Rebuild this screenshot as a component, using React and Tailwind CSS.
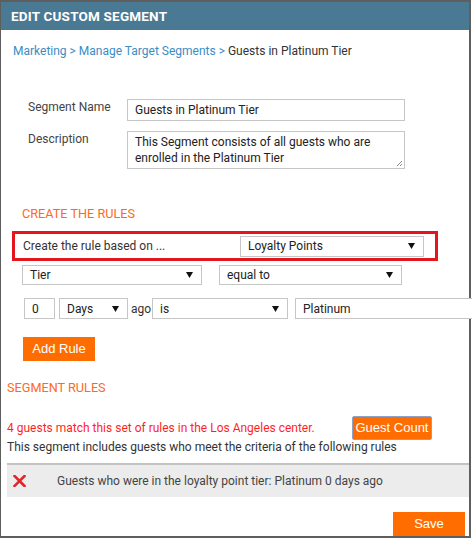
import React from 'react';

// small filled arrow used by the fake selects
const Caret = () => (
  <svg width="7" height="6" viewBox="0 0 7 6" className="shrink-0">
    <path d="M0 0 H7 L3.5 6 Z" fill="#111" />
  </svg>
);

const Select = ({ value, className = '' }) => (
  <div className={`flex items-center justify-between border border-[#c6c6c6] bg-white pl-[7px] pr-[8px] text-[12px] text-[#222] ${className}`}>
    <span>{value}</span>
    <Caret />
  </div>
);

const TextBox = ({ value, className = '' }) => (
  <div className={`flex items-center border border-[#c6c6c6] bg-white px-[7px] text-[12px] text-[#222] ${className}`}>
    {value}
  </div>
);

const RemoveIcon = () => (
  <svg width="13" height="12" viewBox="0 0 13 12">
    <path d="M1.5 1 L11.5 11 M11.5 1 L1.5 11" stroke="#e3242b" strokeWidth="2.6" strokeLinecap="square" />
  </svg>
);

export default function App() {
  return (
    <div className="w-[472px] h-[538px] overflow-hidden bg-white font-['Roboto',sans-serif] text-[12px] text-[#333]">
      <div className="relative w-[471px] h-[538px] border-l border-r-2 border-b-2 border-t-2 border-[#5e5e5e]">
        {/* Header */}
        <div className="h-[28px] bg-[#4a7a93] pl-[10px] flex items-center text-white font-bold text-[13.5px] tracking-[0.2px]">
          EDIT CUSTOM SEGMENT
        </div>

        {/* Breadcrumb */}
        <div className="mt-[13px] pl-[12px] leading-[16px]">
          <span className="text-[#3a8dc5]">Marketing</span>
          <span className="text-[#3a8dc5]"> &gt; </span>
          <span className="text-[#3a8dc5]">Manage Target Segments</span>
          <span className="text-[#3a8dc5]"> &gt; </span>
          <span className="text-[#333]">Guests in Platinum Tier</span>
        </div>

        {/* Name / Description */}
        <div className="mt-[40px] pl-[27px] flex flex-col gap-[10px]">
          <div className="flex items-start">
            <div className="w-[99px] leading-[16px] text-[#444]">Segment Name</div>
            <TextBox value="Guests in Platinum Tier" className="w-[278px] h-[22px]" />
          </div>
          <div className="flex items-start">
            <div className="w-[99px] leading-[16px] text-[#444]">Description</div>
            <div className="relative w-[278px] h-[38px] border border-[#c6c6c6] px-[7px] pt-[2px] leading-[16px] text-[#222]">
              This Segment consists of all guests who are enrolled in the Platinum Tier
              <svg width="7" height="7" viewBox="0 0 7 7" className="absolute right-[1px] bottom-[1px]">
                <path d="M6 1 L1 6 M6 4 L4 6" stroke="#888" strokeWidth="1" />
              </svg>
            </div>
          </div>
        </div>

        {/* Create the rules */}
        <div className="mt-[37px] pl-[21px] leading-[16px] text-[12.7px] text-[#ff6a1a]">CREATE THE RULES</div>

        <div className="mt-[9px] ml-[11px] w-[426px] h-[30px] border-[3px] border-[#e3151d] flex items-center pl-[8px]">
          <div className="w-[217px] text-[#333]">Create the rule based on ...</div>
          <Select value="Loyalty Points" className="w-[184px] h-[21px]" />
        </div>

        <div className="mt-[4px] pl-[21px] flex items-center gap-[17px]">
          <Select value="Tier" className="w-[180px] h-[20px]" />
          <Select value="equal to" className="w-[183px] h-[20px]" />
        </div>

        <div className="mt-[13px] pl-[23px] flex items-center w-[540px]">
          <TextBox value="0" className="w-[31px] h-[21px]" />
          <Select value="Days" className="ml-[4px] w-[69px] h-[21px]" />
          <span className="ml-[3px] w-[21px] text-[#333]">ago</span>
          <Select value="is" className="ml-[0px] w-[136px] h-[21px]" />
          <TextBox value="Platinum" className="ml-[7px] w-[220px] h-[21px]" />
        </div>

        <button className="mt-[18px] ml-[22px] w-[72px] h-[24px] bg-[#ff6d00] text-white font-['Liberation_Sans',sans-serif] text-[13px] whitespace-nowrap flex items-center justify-center">
          Add Rule
        </button>

        {/* Segment rules */}
        <div className="mt-[19px] pl-[6px] leading-[16px] text-[12.7px] text-[#ff6a1a]">SEGMENT RULES</div>

        <div className="mt-[20px] pl-[6px] flex items-center h-[23px]">
          <div className="w-[345px] text-[#ff1f1f]">4 guests match this set of rules in the Los Angeles center.</div>
          <button className="w-[80px] h-[24px] bg-[#ff6d00] border border-[#8ea2c9] rounded-[2px] text-white font-['Liberation_Sans',sans-serif] text-[13px] whitespace-nowrap flex items-center justify-center">
            Guest Count
          </button>
        </div>

        <div className="pl-[6px] leading-[16px] text-[#333]">
          This segment includes guests who meet the criteria of the following rules
        </div>

        <div className="mt-[8px] ml-[6px] h-[34px] bg-[#ececec] border-t-2 border-[#c3c3c3] flex items-center">
          <div className="w-[50px] pl-[6px] flex items-center"><RemoveIcon /></div>
          <span className="text-[#444]">Guests who were in the loyalty point tier: Platinum 0 days ago</span>
        </div>

        <div className="mt-[15px] flex justify-end pr-[4px]">
          <button className="w-[72px] h-[24px] bg-[#ff6d00] text-white font-['Liberation_Sans',sans-serif] text-[13px] flex items-center justify-center">
            Save
          </button>
        </div>
      </div>
    </div>
  );
}
